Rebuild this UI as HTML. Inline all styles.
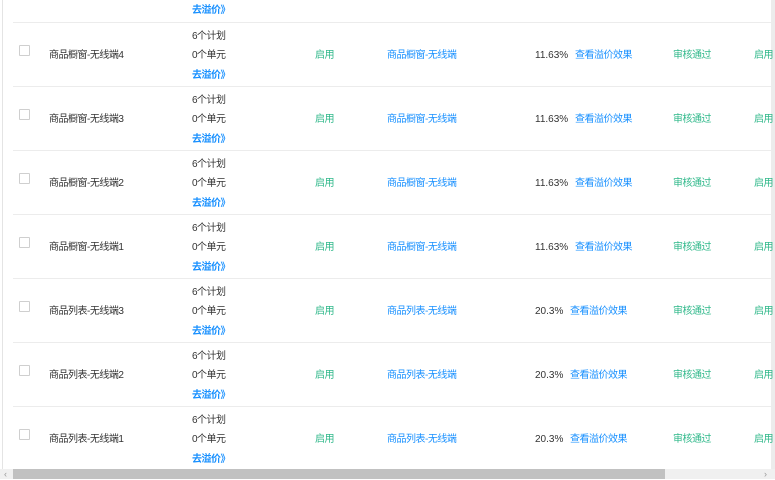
<!DOCTYPE html>
<html><head><meta charset="utf-8"><style>
*{margin:0;padding:0;box-sizing:border-box}
body{width:775px;height:479px;overflow:hidden;background:#fff;font-family:"Liberation Sans","Noto Sans CJK SC",sans-serif;font-size:10px;color:#333;position:relative}
.a{position:absolute;white-space:nowrap;line-height:12px;letter-spacing:-0.5px}
.p{letter-spacing:0}
.b{color:#1890ff}.g{color:#2fb88a}
.line{position:absolute;left:13px;width:758px;height:1px;background:#ececec}
.cb{position:absolute;left:19px;width:11px;height:11px;border:1px solid #cfcfcf;background:#fff;border-radius:1px}
</style></head><body>
<div style="position:absolute;left:2px;top:0;width:1px;height:469px;background:#e4e4e4"></div>
<div style="position:absolute;left:771px;top:0;width:4px;height:469px;background:#ececec"></div>
<div class="a b" style="left:192px;top:5px;font-weight:bold">去溢价》</div>
<div id="rows"></div>
<div style="position:absolute;left:0;top:469px;width:775px;height:10px;background:#f0f0f0"></div>
<div style="position:absolute;left:13px;top:469px;width:652px;height:10px;background:#c1c1c1"></div>
<div class="a" style="left:4px;top:468px;color:#999;font-size:9px">‹</div>
<div class="a" style="left:764px;top:468px;color:#999;font-size:9px">›</div>
<script>
var d=[["商品橱窗-无线端4","商品橱窗-无线端","11.63%",575],["商品橱窗-无线端3","商品橱窗-无线端","11.63%",575],["商品橱窗-无线端2","商品橱窗-无线端","11.63%",575],["商品橱窗-无线端1","商品橱窗-无线端","11.63%",575],["商品列表-无线端3","商品列表-无线端","20.3%",570],["商品列表-无线端2","商品列表-无线端","20.3%",570],["商品列表-无线端1","商品列表-无线端","20.3%",570]];
var h="";
d.forEach(function(r,i){var t=22+i*64,c=t+34;
h+='<div class="line" style="top:'+t+'px"></div>';
h+='<div class="cb" style="top:'+(c-11)+'px"></div>';
h+='<div class="a" style="left:49px;top:'+(c-6)+'px">'+r[0]+'</div>';
h+='<div class="a" style="left:192px;top:'+(c-25)+'px">6个计划</div>';
h+='<div class="a" style="left:192px;top:'+(c-6)+'px">0个单元</div>';
h+='<div class="a b" style="left:192px;top:'+(c+14)+'px;font-weight:bold">去溢价》</div>';
h+='<div class="a g" style="left:315px;top:'+(c-6)+'px">启用</div>';
h+='<div class="a b" style="left:387px;top:'+(c-6)+'px">'+r[1]+'</div>';
h+='<div class="a p" style="left:535px;top:'+(c-6)+'px">'+r[2]+'</div>';
h+='<div class="a b" style="left:'+r[3]+'px;top:'+(c-6)+'px">查看溢价效果</div>';
h+='<div class="a g" style="left:673px;top:'+(c-6)+'px">审核通过</div>';
h+='<div class="a g" style="left:754px;top:'+(c-6)+'px">启用</div>';
});
document.getElementById("rows").innerHTML=h;
</script>
</body></html>
